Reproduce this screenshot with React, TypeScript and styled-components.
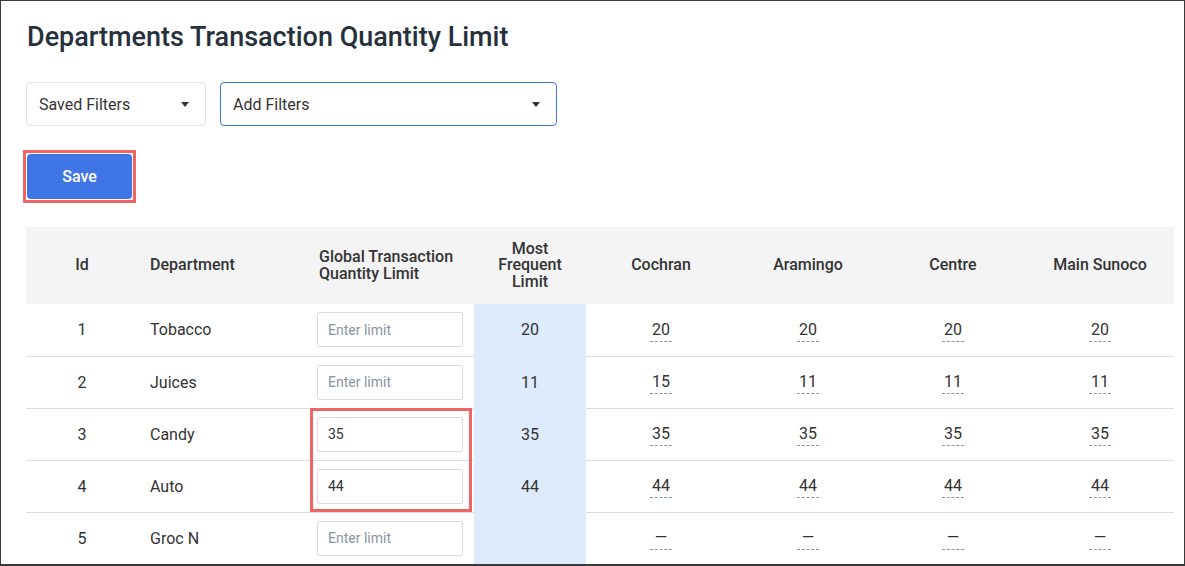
import { FC } from 'react';
import styled, { createGlobalStyle } from 'styled-components';

interface Row {
  id: number;
  department: string;
  global?: string;
  mostFrequent?: number;
  stores: (number | null)[];
}

const stores = ['Cochran', 'Aramingo', 'Centre', 'Main Sunoco'];

const rows: Row[] = [
  { id: 1, department: 'Tobacco', mostFrequent: 20, stores: [20, 20, 20, 20] },
  { id: 2, department: 'Juices', mostFrequent: 11, stores: [15, 11, 11, 11] },
  { id: 3, department: 'Candy', global: '35', mostFrequent: 35, stores: [35, 35, 35, 35] },
  { id: 4, department: 'Auto', global: '44', mostFrequent: 44, stores: [44, 44, 44, 44] },
  { id: 5, department: 'Groc N', stores: [null, null, null, null] },
];

const App: FC = () => {
  return (
    <>
      <GlobalStyle />
      <Frame>
        <Title>Departments Transaction Quantity Limit</Title>

        <FilterBar>
          <Dropdown $width={180}>
            <span>Saved Filters</span>
            <Caret />
          </Dropdown>
          <Dropdown $width={337} $active>
            <span>Add Filters</span>
            <Caret />
          </Dropdown>
        </FilterBar>

        <SaveMark>
          <SaveButton>Save</SaveButton>
        </SaveMark>

        <TableWrap>
          <Table>
            <colgroup>
              <col style={{ width: 112 }} />
              <col style={{ width: 167 }} />
              <col style={{ width: 169 }} />
              <col style={{ width: 112 }} />
              <col style={{ width: 150 }} />
              <col style={{ width: 144 }} />
              <col style={{ width: 146 }} />
              <col style={{ width: 148 }} />
            </colgroup>
            <thead>
              <tr>
                <Th $align="center">Id</Th>
                <Th>Department</Th>
                <Th $indent={14}>
                  Global Transaction
                  <br />
                  Quantity Limit
                </Th>
                <Th $align="center">
                  Most
                  <br />
                  Frequent
                  <br />
                  Limit
                </Th>
                {stores.map((s) => (
                  <Th key={s} $align="center">
                    {s}
                  </Th>
                ))}
              </tr>
            </thead>
            <tbody>
              {rows.map((row) => (
                <tr key={row.id}>
                  <Td $align="center">{row.id}</Td>
                  <Td>{row.department}</Td>
                  <Td>
                    <LimitInput placeholder="Enter limit" defaultValue={row.global ?? ''} />
                  </Td>
                  <Td $align="center" $highlight>
                    {row.mostFrequent ?? ''}
                  </Td>
                  {row.stores.map((v, i) => (
                    <Td key={i} $align="center">
                      <StoreValue>{v ?? '—'}</StoreValue>
                    </Td>
                  ))}
                </tr>
              ))}
            </tbody>
          </Table>
          <Annotation />
        </TableWrap>
      </Frame>
    </>
  );
};

export default App;

const GlobalStyle = createGlobalStyle`
  * {
    box-sizing: border-box;
  }

  body {
    margin: 0;
    background: #ffffff;
    font-family: Roboto, "Liberation Sans", Arial, sans-serif;
    color: #333333;
  }
`;

const Frame = styled.div`
  width: 1185px;
  height: 566px;
  border: 1px solid #3a3a3a;
  border-bottom-width: 2px;
  padding: 20px 0 0 25px;
  overflow: hidden;
`;

const Title = styled.h1`
  margin: 0 0 0 1px;
  font-size: 27px;
  line-height: 32px;
  font-weight: 500;
  color: #27303d;
  white-space: nowrap;
`;

const FilterBar = styled.div`
  display: flex;
  gap: 14px;
  margin-top: 29px;
`;

const Dropdown = styled.div<{ $width: number; $active?: boolean }>`
  display: flex;
  align-items: center;
  justify-content: space-between;
  width: ${(p) => p.$width}px;
  height: 44px;
  padding: 0 16px 0 12px;
  border: 1px solid ${(p) => (p.$active ? '#3d74e0' : '#dcdfe4')};
  border-radius: 4px;
  font-size: 16px;
  color: #333333;
  background: #ffffff;
`;

const Caret = styled.span`
  width: 0;
  height: 0;
  border-left: 4.5px solid transparent;
  border-right: 4.5px solid transparent;
  border-top: 5px solid #333333;
`;

const SaveMark = styled.div`
  display: inline-block;
  margin: 24px 0 0 -3px;
  padding: 1px;
  border: 3px solid #f06464;
`;

const SaveButton = styled.button`
  display: block;
  width: 105px;
  height: 45px;
  border: none;
  border-radius: 4px;
  background: #4075e6;
  color: #ffffff;
  font-family: inherit;
  font-size: 16px;
  font-weight: 500;
`;

const TableWrap = styled.div`
  position: relative;
  margin-top: 24px;
`;

const Table = styled.table`
  width: 1148px;
  border-collapse: collapse;
  table-layout: fixed;
`;

const Th = styled.th<{ $align?: 'left' | 'center'; $indent?: number }>`
  height: 77px;
  padding: 0 12px 0 ${(p) => p.$indent ?? 12}px;
  background: #f4f4f4;
  font-size: 16px;
  line-height: 16.5px;
  font-weight: 500;
  color: #333333;
  text-align: ${(p) => p.$align ?? 'left'};
  vertical-align: middle;
  white-space: nowrap;
`;

const Td = styled.td<{ $align?: 'left' | 'center'; $highlight?: boolean }>`
  height: 52px;
  padding: 0 12px;
  border-bottom: 1px solid ${(p) => (p.$highlight ? '#deebfc' : '#dcdddf')};
  background: ${(p) => (p.$highlight ? '#deebfc' : 'transparent')};
  font-size: 16px;
  color: #333333;
  text-align: ${(p) => p.$align ?? 'left'};
  vertical-align: middle;
`;

const LimitInput = styled.input`
  display: block;
  width: 146px;
  height: 35px;
  padding: 0 10px;
  border: 1px solid #d9dce1;
  border-radius: 2px;
  font-family: inherit;
  font-size: 14px;
  color: #333333;
  outline: none;

  &::placeholder {
    color: #8a94a6;
  }
`;

const StoreValue = styled.span`
  display: inline-block;
  min-width: 22px;
  padding: 3px 0 2px;
  border-bottom: 1px dashed #8896ad;
  line-height: 18px;
  text-align: center;
`;

const Annotation = styled.div`
  position: absolute;
  left: 284px;
  top: 181px;
  width: 162px;
  height: 104px;
  border: 3px solid #f06464;
  pointer-events: none;
`;
